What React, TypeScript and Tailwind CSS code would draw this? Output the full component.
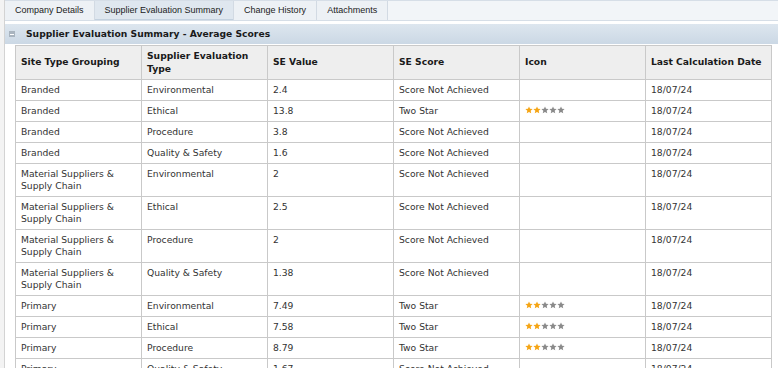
import { Fragment } from 'react';

interface Row {
  site: string;
  type: string;
  value: string;
  score: string;
  stars?: number;
}

const rows: Row[] = [
  { site: 'Branded', type: 'Environmental', value: '2.4', score: 'Score Not Achieved' },
  { site: 'Branded', type: 'Ethical', value: '13.8', score: 'Two Star', stars: 2 },
  { site: 'Branded', type: 'Procedure', value: '3.8', score: 'Score Not Achieved' },
  { site: 'Branded', type: 'Quality & Safety', value: '1.6', score: 'Score Not Achieved' },
  { site: 'Material Suppliers & Supply Chain', type: 'Environmental', value: '2', score: 'Score Not Achieved' },
  { site: 'Material Suppliers & Supply Chain', type: 'Ethical', value: '2.5', score: 'Score Not Achieved' },
  { site: 'Material Suppliers & Supply Chain', type: 'Procedure', value: '2', score: 'Score Not Achieved' },
  { site: 'Material Suppliers & Supply Chain', type: 'Quality & Safety', value: '1.38', score: 'Score Not Achieved' },
  { site: 'Primary', type: 'Environmental', value: '7.49', score: 'Two Star', stars: 2 },
  { site: 'Primary', type: 'Ethical', value: '7.58', score: 'Two Star', stars: 2 },
  { site: 'Primary', type: 'Procedure', value: '8.79', score: 'Two Star', stars: 2 },
  { site: 'Primary', type: 'Quality & Safety', value: '1.67', score: 'Score Not Achieved' },
];

const tabs = ['Company Details', 'Supplier Evaluation Summary', 'Change History', 'Attachments'];

const headers = ['Site Type Grouping', 'Supplier Evaluation Type', 'SE Value', 'SE Score', 'Icon', 'Last Calculation Date'];

function Stars({ count }: { count: number }) {
  return (
    <div className="flex pt-[1px]">
      {[0, 1, 2, 3, 4].map((i) => (
        <svg key={i} width="8" height="8" viewBox="0 0 24 24">
          <path
            d="M12 1.5l3.1 7.1 7.7.7-5.8 5.1 1.7 7.6L12 18l-6.7 4 1.7-7.6L1.2 9.3l7.7-.7z"
            fill={i < count ? '#f5a515' : '#8a8a8a'}
          />
        </svg>
      ))}
    </div>
  );
}

const cell = 'border border-[#c9c9c9] px-[5px] pt-[4px] pb-[4px] align-top leading-[12px]';

export default function App() {
  return (
    <div className="flex h-[368px] w-[778px] overflow-hidden bg-white font-['DejaVu_Sans',Verdana,sans-serif] text-[9.2px] text-[#333]">
      {/* left gutter */}
      <div className="w-[5px] shrink-0 border-r border-[#d3d3d3] bg-[#f3f3f3]" />

      <div className="flex min-w-0 flex-1 flex-col">
        {/* tabs */}
        <div className="flex h-[21px] shrink-0 border-y border-[#d6dee7] bg-[#f2f5f8] font-['Liberation_Sans',Arial,sans-serif] text-[9px] text-[#222]">
          {tabs.map((t, i) => (
            <div
              key={t}
              className={
                'flex items-center border-r border-[#d2dae3] px-[10px] ' +
                (i === 1 ? 'bg-[#dfe7ef] shadow-[inset_0_-1px_0_#c3d1df]' : 'bg-[#edf1f5]')
              }
            >
              {t}
            </div>
          ))}
        </div>

        {/* section header */}
        <div className="mt-[3px] flex h-[20px] shrink-0 items-center bg-gradient-to-b from-[#dde6ef] to-[#cbd8e5] pl-[4px]">
          <div className="flex h-[6px] w-[6px] items-center justify-center bg-[#a9b4bf]">
            <div className="h-[1px] w-[4px] bg-white" />
          </div>
          <span className="ml-[11px] text-[9.2px] font-bold text-[#1a1a1a]">
            Supplier Evaluation Summary - Average Scores
          </span>
        </div>

        {/* table */}
        <table className="ml-[10px] mt-[1px] w-[757px] table-fixed border-collapse">
          <colgroup>
            {headers.map((h) => (
              <col key={h} className="w-[126px]" />
            ))}
          </colgroup>
          <thead>
            <tr className="h-[34px] bg-[#eeeeee]">
              {headers.map((h) => (
                <th
                  key={h}
                  className="border border-[#c9c9c9] px-[5px] text-left align-middle leading-[12.5px] font-bold text-[#1a1a1a]"
                >
                  {h}
                </th>
              ))}
            </tr>
          </thead>
          <tbody>
            {rows.map((r, i) => (
              <Fragment key={i}>
                <tr>
                  <td className={cell}>{r.site}</td>
                  <td className={cell}>{r.type}</td>
                  <td className={cell}>{r.value}</td>
                  <td className={cell}>{r.score}</td>
                  <td className={cell}>{r.stars ? <Stars count={r.stars} /> : null}</td>
                  <td className={cell}>18/07/24</td>
                </tr>
              </Fragment>
            ))}
          </tbody>
        </table>
      </div>
    </div>
  );
}
